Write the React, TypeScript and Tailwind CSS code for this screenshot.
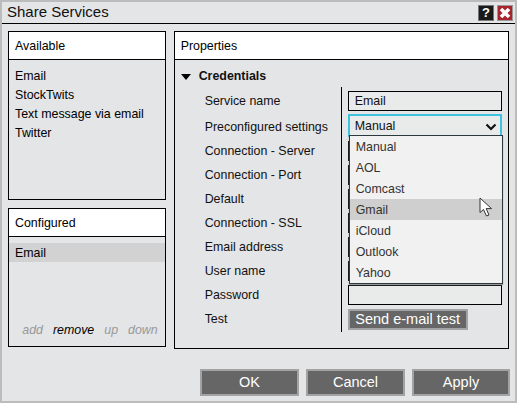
import { useState } from "react";

const available = ["Email", "StockTwits", "Text message via email", "Twitter"];
const options = ["Manual", "AOL", "Comcast", "Gmail", "iCloud", "Outlook", "Yahoo"];

const rows = [
  "Service name",
  "Preconfigured settings",
  "Connection - Server",
  "Connection - Port",
  "Default",
  "Connection - SSL",
  "Email address",
  "User name",
  "Password",
  "Test",
];

const PanelHeader = ({ title }: { title: string }) => (
  <div className="flex h-[28px] shrink-0 items-center border-b border-black bg-white pl-[6px] pt-[2px] text-[12.4px] text-black">
    {title}
  </div>
);

const Field = ({ value }: { value?: string }) => (
  <div className="flex h-[20px] w-[154px] items-center border border-black bg-[#e9eaea] pl-[6px] text-[12.4px] text-[#111]">
    {value}
  </div>
);

const FooterButton = ({ label, width }: { label: string; width: string }) => (
  <button className={`flex h-[27px] items-center justify-center border-2 border-[#a3a3a3] bg-[#666666] text-[14.5px] text-white ${width}`}>
    {label}
  </button>
);

const Cursor = () => (
  <svg className="absolute left-[129px] top-[-2px]" width="14" height="21" viewBox="0 0 14 21">
    <path d="M1 1 L1 15.5 L4.5 12.5 L7.5 19 L10 18 L7.2 11.6 L12.5 11.6 Z" fill="#fff" stroke="#333" strokeWidth="1" />
  </svg>
);

export default function App() {
  const [selected] = useState("Manual");

  return (
    <div className="flex h-[403px] w-[517px] flex-col overflow-hidden border-x-2 border-b-2 border-t-2 border-[#bcbcbc] bg-[#e4e5e7] font-['Liberation_Sans',Arial,sans-serif]">
      <div className="flex h-[22px] shrink-0 items-center justify-between border-b border-black pl-[5px] pr-[2px] text-[15px] text-[#111]">
        <span>Share Services</span>
        <div className="flex gap-[3px]">
          <div className="flex h-[16px] w-[16px] items-center justify-center border border-[#777] bg-[#1a1a1a] text-[13px] font-bold leading-none text-white">
            ?
          </div>
          <div className="flex h-[16px] w-[16px] items-center justify-center border border-[#999] bg-[#a8232c]">
            <svg width="14" height="14" viewBox="0 0 14 14">
              <path d="M3 3 L11 11 M11 3 L3 11" stroke="#fff" strokeWidth="3.6" />
            </svg>
          </div>
        </div>
      </div>

      <div className="flex gap-[8px] px-[6px] pt-[7px]">
        <div className="flex w-[158px] flex-col gap-[8px]">
          <div className="flex h-[169px] flex-col border border-black">
            <PanelHeader title="Available" />
            <div className="pl-[6px] pt-[7px] text-[12.4px] leading-[19px] text-black">
              {available.map((name) => (
                <div key={name}>{name}</div>
              ))}
            </div>
          </div>

          <div className="flex h-[139px] flex-col border border-black">
            <PanelHeader title="Configured" />
            <div className="mt-[6px] flex h-[19px] items-center bg-[#d2d2d2] pl-[6px] pt-[2px] text-[12.4px] text-black">Email</div>
            <div className="mt-auto flex justify-end gap-[10px] pb-[6px] pr-[7px] text-[12.4px] italic leading-[19px] text-[#999]">
              <span>add</span>
              <span className="text-black">remove</span>
              <span>up</span>
              <span>down</span>
            </div>
          </div>
        </div>

        <div className="flex h-[318px] w-[336px] flex-col border border-black">
          <PanelHeader title="Properties" />
          <div className="flex h-[30px] items-center pl-[6px] pt-[3px] text-[12.4px] font-bold text-[#111]">
            <span className="mr-[8px] h-0 w-0 border-x-[5px] border-t-[6px] border-x-transparent border-t-black" />
            Credentials
          </div>
          <div className="flex items-start">
            <div className="w-[166px] pl-[30px] text-[12.4px] text-[#111]">
              {rows.map((row, i) => (
                <div key={row} className={i === 0 ? "flex h-[25px] items-center pb-[2px]" : "flex h-[24px] items-center"}>
                  {row}
                </div>
              ))}
            </div>
            <div className="relative -mt-[3px] h-[245px] border-l border-black pl-[6px] pt-[4px]">
              <Field value="Email" />
              <div className="mt-[3px] flex h-[23px] w-[154px] items-center justify-between border-2 border-[#3cc3e0] bg-[#e9eaea] pl-[5px] pr-[3px] pt-[2px] text-[12.4px] text-[#111]">
                {selected}
                <svg width="12" height="8" viewBox="0 0 12 8">
                  <path d="M1.5 1.5 L6 6 L10.5 1.5" fill="none" stroke="#111" strokeWidth="2.2" />
                </svg>
              </div>
              <div className="mt-[4px] flex flex-col gap-[4px]">
                {rows.slice(2, 8).map((row) => (
                  <Field key={row} />
                ))}
              </div>
              <div className="mt-[4px]">
                <Field />
              </div>
              <button className="mt-[4px] flex h-[21px] w-[120px] items-center justify-center border-2 border-[#a3a3a3] bg-[#666666] text-[14.5px] text-white">
                Send e-mail test
              </button>

              <div className="absolute left-[7px] top-[48px] w-[154px] border border-[#2b3a3f] bg-[#f1f1f1] text-[12.4px] text-[#333] shadow-[0_1px_1px_#999]">
                {options.map((option) => (
                  <div
                    key={option}
                    className={
                      option === "Gmail"
                        ? "relative flex h-[21px] items-center bg-[#cfcfcf] pl-[6px] pt-[2px]"
                        : "flex h-[21px] items-center pl-[6px] pt-[2px]"
                    }
                  >
                    {option}
                    {option === "Gmail" && <Cursor />}
                  </div>
                ))}
              </div>
            </div>
          </div>
        </div>
      </div>

      <div className="flex justify-end gap-[7px] pr-[5px] pt-[20px]">
        <FooterButton label="OK" width="w-[99px]" />
        <FooterButton label="Cancel" width="w-[99px]" />
        <FooterButton label="Apply" width="w-[98px]" />
      </div>
    </div>
  );
}
